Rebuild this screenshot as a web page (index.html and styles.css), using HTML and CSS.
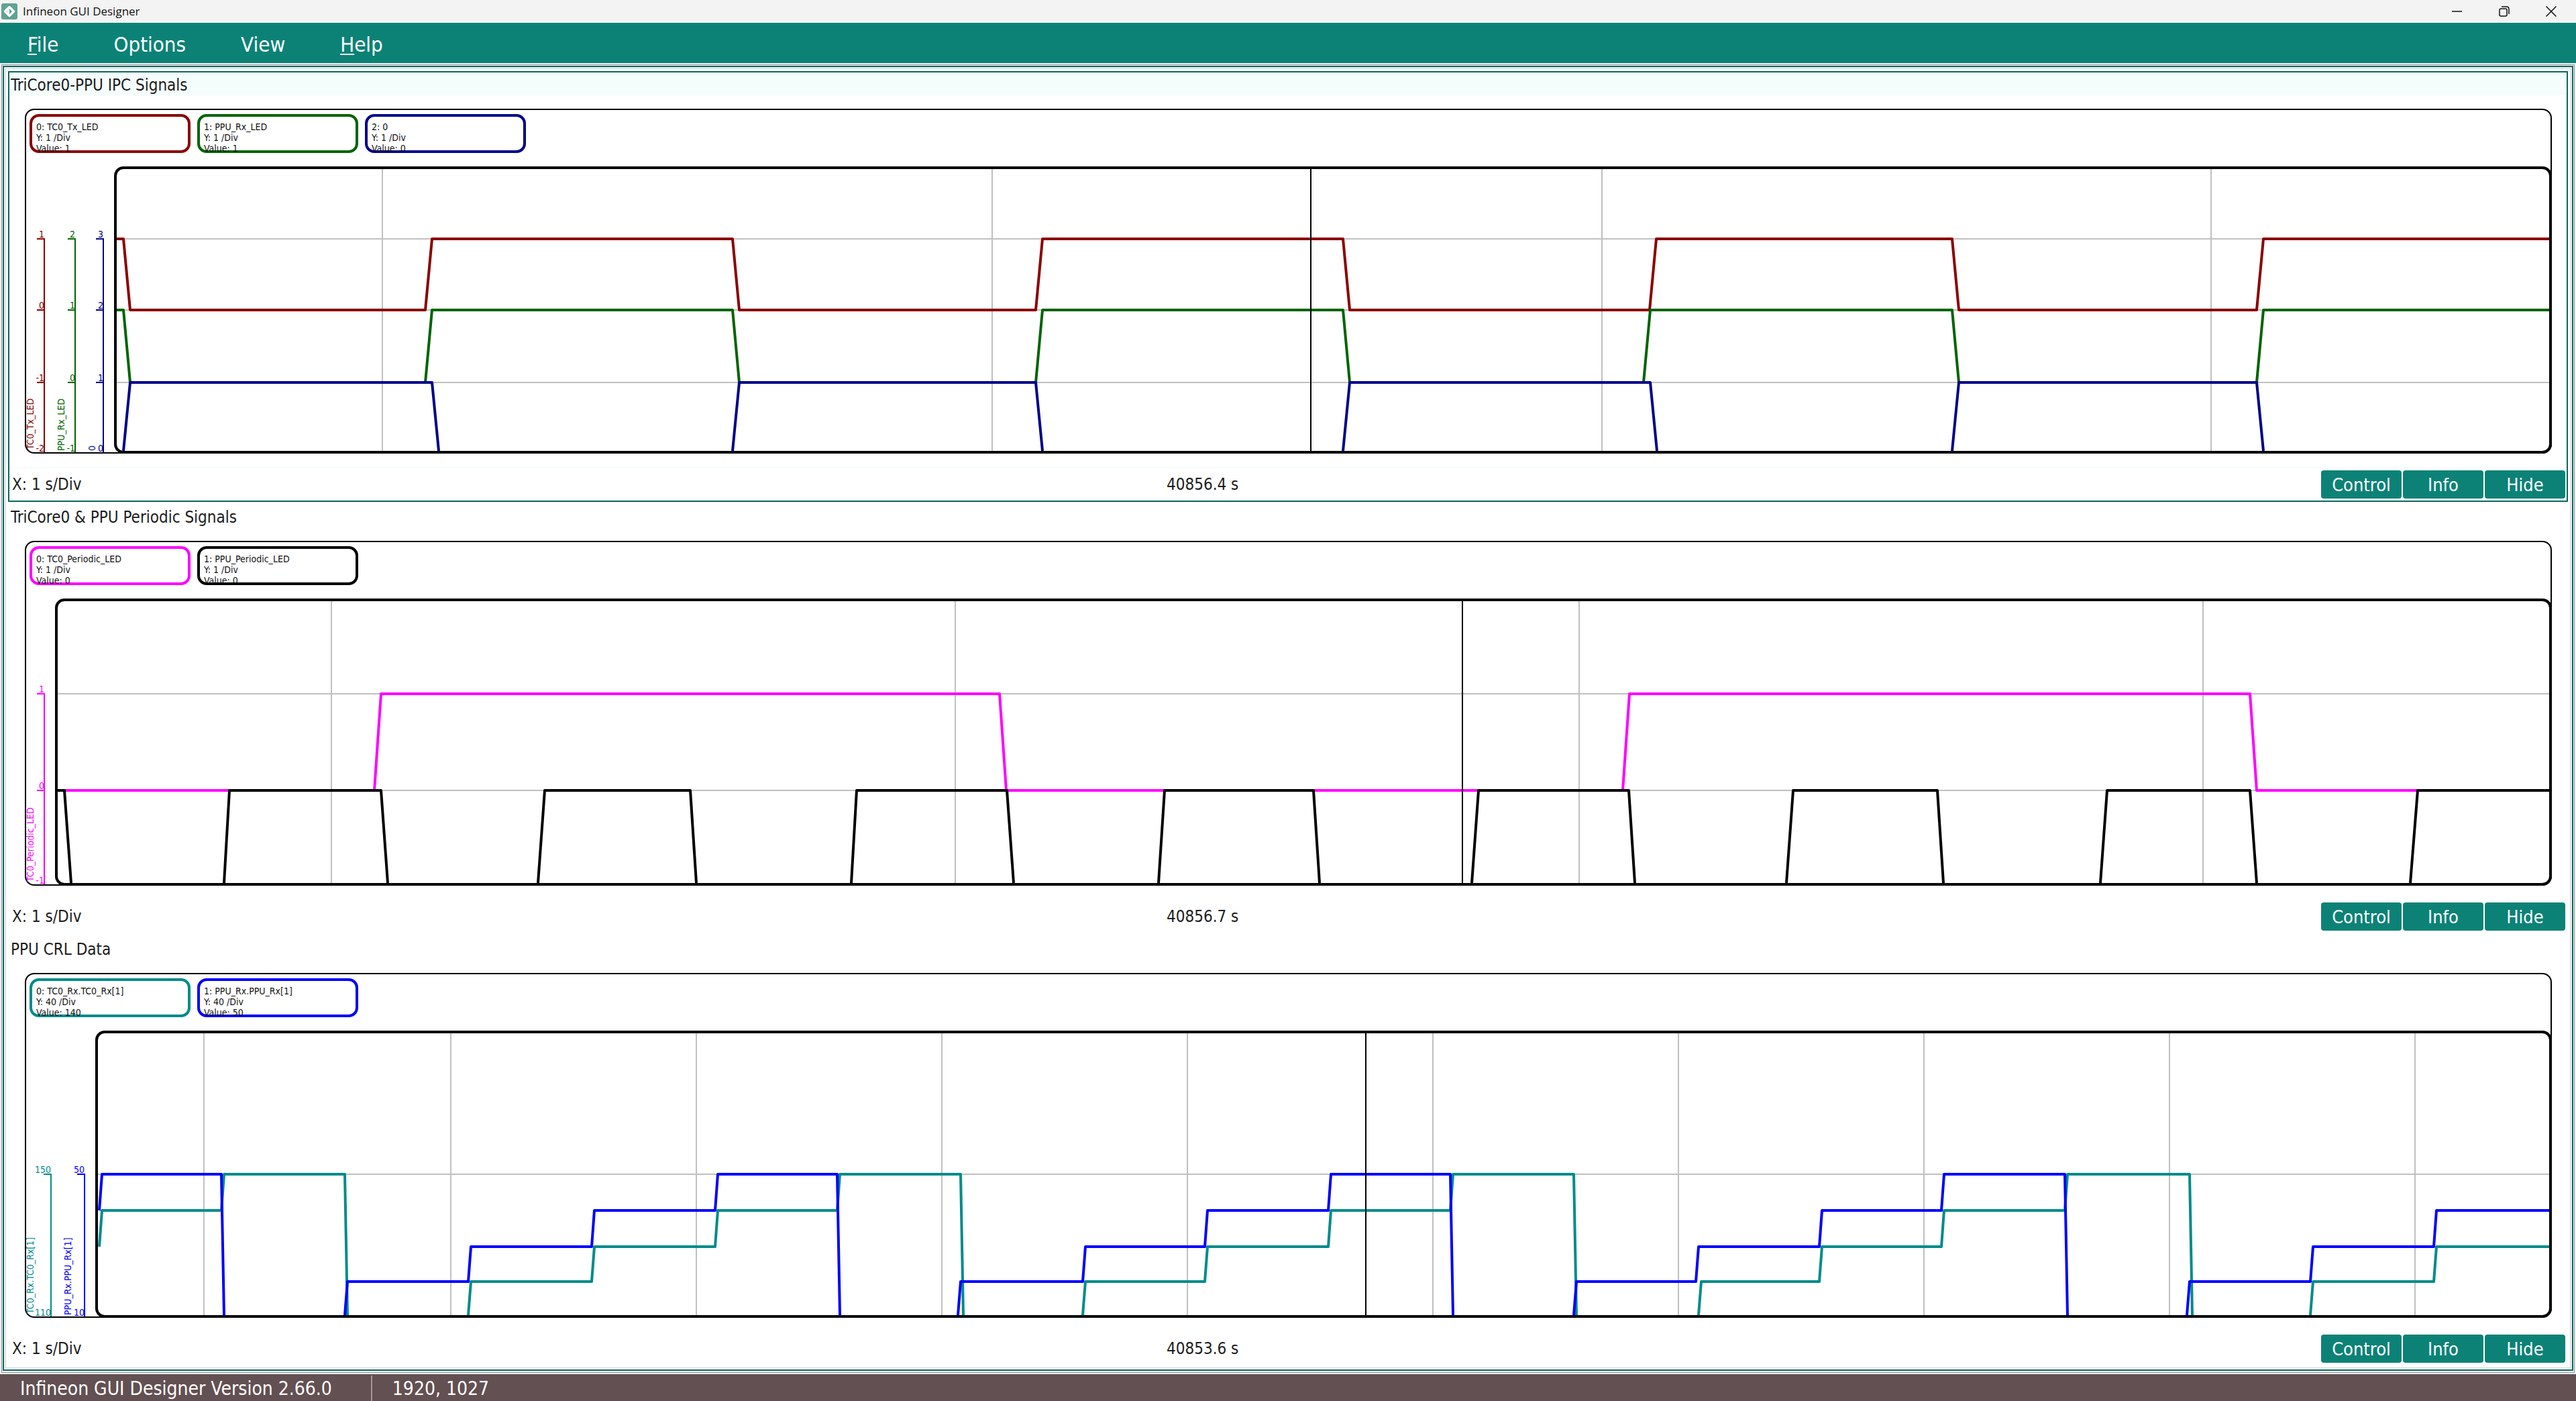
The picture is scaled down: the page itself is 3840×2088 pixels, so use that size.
FILE: index.html
```html
<!DOCTYPE html>
<html lang="en">
<head>
<meta charset="utf-8">
<title>Infineon GUI Designer</title>
<link rel="stylesheet" href="styles.css">
</head>
<body>
<header class="titlebar">
  <svg class="app-icon" width="24" height="24" viewBox="0 0 24 24" aria-hidden="true">
    <rect width="24" height="24" rx="3" fill="#5fa393"/>
    <path d="M12 5.500L18.500 12L12 18.500L5.500 12Z" fill="none" stroke="#fff" stroke-width="3.500" stroke-linejoin="round"/>
    <path d="M12 9V15A3 3 0 0 1 12 9Z" fill="#fff"/>
  </svg>
  <h1 class="app-title">Infineon GUI Designer</h1>
  <div class="window-controls">
    <button type="button" aria-label="Minimize"><svg width="16" height="16" viewBox="0 0 16 16"><path d="M0 8H15"/></svg></button>
    <button type="button" aria-label="Restore"><svg width="16" height="16" viewBox="0 0 16 16"><rect x="1" y="4" width="11" height="11" rx="2"/><path d="M4 1H11.500Q15 1 15 4.500V12"/></svg></button>
    <button type="button" aria-label="Close"><svg width="16" height="16" viewBox="0 0 16 16"><path d="M0.500 0.500L15.500 15.500M15.500 0.500L0.500 15.500"/></svg></button>
  </div>
</header>

<nav class="menubar">
  <button type="button"><u>F</u>ile</button>
  <button type="button">Options</button>
  <button type="button">View</button>
  <button type="button"><u>H</u>elp</button>
</nav>

<main class="workspace">
  <div class="frame">
    <div class="panels">

      <section class="panel selected">
        <h2 class="panel-title">TriCore0-PPU IPC Signals</h2>
        <div class="canvas">
          <div class="scope">
            <ul class="legend">
              <li class="chip darkred">0: TC0_Tx_LED<br>Y: 1 /Div<br>Value: 1</li>
              <li class="chip green">1: PPU_Rx_LED<br>Y: 1 /Div<br>Value: 1</li>
              <li class="chip navy">2: 0<br>Y: 1 /Div<br>Value: 0</li>
            </ul>
            <div class="chart">
              <svg class="axes" width="133" height="428">
                <g class="darkred">
                  <path d="M18 108H30M18 214H30M18 322H30M29 108V426"/>
                  <text x="29" y="106">1</text><text x="29" y="212">0</text><text x="29" y="320">-1</text><text x="29" y="425">-2</text>
                  <text class="name" transform="translate(13 422) rotate(-90)">TC0_Tx_LED</text>
                </g>
                <g class="green">
                  <path d="M64 108H76M64 214H76M64 322H76M75 108V426"/>
                  <text x="75" y="106">2</text><text x="75" y="212">1</text><text x="75" y="320">0</text><text x="75" y="425">-1</text>
                  <text class="name" transform="translate(59 424) rotate(-90)">PPU_Rx_LED</text>
                </g>
                <g class="navy">
                  <path d="M106 108H118M106 214H118M106 322H118M117 108V426"/>
                  <text x="117" y="106">3</text><text x="117" y="212">2</text><text x="117" y="320">1</text><text x="117" y="425">0</text>
                  <text class="name" transform="translate(105 424) rotate(-90)">0</text>
                </g>
              </svg>
              <div class="plot">
                <svg class="traces" viewBox="174 0 3626 420" preserveAspectRatio="none">
                  <path class="grid" d="M174 104H3800M174 210H3800M174 318H3800M570 0V420M1479 0V420M2388 0V420M3296 0V420"/>
                  <path class="darkred" d="M174 104H184L194 210H634L644 104H1092L1102 210H1544L1554 104H2002L2012 210H2459L2469 104H2910L2920 210H3364L3374 104H3800"/>
                  <path class="green" d="M174 210H184L194 318H634L644 210H1092L1102 318H1544L1554 210H2002L2012 318H2450L2460 210H2910L2920 318H3364L3374 210H3800"/>
                  <path class="navy" d="M184 420L194 318H644L654 420M1092 420L1102 318H1544L1554 420M2002 420L2012 318H2460L2470 420M2910 420L2920 318H3364L3374 420"/>
                  <path class="cursor" d="M1954 0V420"/>
                </svg>
              </div>
            </div>
          </div>
        </div>
        <footer class="panel-footer">
          <span class="readout">X: 1 s/Div</span>
          <span class="readout">40856.4 s</span>
          <div class="actions"><button type="button">Control</button><button type="button">Info</button><button type="button">Hide</button></div>
        </footer>
      </section>

      <section class="panel">
        <h2 class="panel-title">TriCore0 &amp; PPU Periodic Signals</h2>
        <div class="canvas">
          <div class="scope">
            <ul class="legend">
              <li class="chip magenta">0: TC0_Periodic_LED<br>Y: 1 /Div<br>Value: 0</li>
              <li class="chip black">1: PPU_Periodic_LED<br>Y: 1 /Div<br>Value: 0</li>
            </ul>
            <div class="chart">
              <svg class="axes" width="45" height="428">
                <g class="magenta">
                  <path d="M18 142H30M18 286H30M29 142V426"/>
                  <text x="29" y="140">1</text><text x="29" y="284">0</text><text x="29" y="425">-1</text>
                  <text class="name" transform="translate(13 422) rotate(-90)">TC0_Periodic_LED</text>
                </g>
              </svg>
              <div class="plot">
                <svg class="traces" viewBox="86 0 3714 420" preserveAspectRatio="none">
                  <path class="grid" d="M86 138H3800M86 282H3800M494 0V420M1424 0V420M2354 0V420M3284 0V420"/>
                  <path class="magenta" d="M86 282H558L568 138H1490L1500 282H2419L2429 138H3354L3364 282H3800"/>
                  <path class="black" d="M86 282H96L106 420M334 420L342 282H568L578 420M802 420L812 282H1029L1038 420M1269 420L1277 282H1501L1511 420M1727 420L1736 282H1958L1967 420M2194 420L2204 282H2428L2437 420M2663 420L2673 282H2888L2897 420M3131 420L3141 282H3354L3364 420M3593 420L3604 282H3800"/>
                  <path class="cursor" d="M2180 0V420"/>
                </svg>
              </div>
            </div>
          </div>
        </div>
        <footer class="panel-footer">
          <span class="readout">X: 1 s/Div</span>
          <span class="readout">40856.7 s</span>
          <div class="actions"><button type="button">Control</button><button type="button">Info</button><button type="button">Hide</button></div>
        </footer>
      </section>

      <section class="panel">
        <h2 class="panel-title">PPU CRL Data</h2>
        <div class="canvas">
          <div class="scope">
            <ul class="legend">
              <li class="chip teal">0: TC0_Rx.TC0_Rx[1]<br>Y: 40 /Div<br>Value: 140</li>
              <li class="chip blue">1: PPU_Rx.PPU_Rx[1]<br>Y: 40 /Div<br>Value: 50</li>
            </ul>
            <div class="chart">
              <svg class="axes" width="105" height="428">
                <g class="teal">
                  <path d="M28 214H40M39 214V426"/>
                  <text x="39" y="212">150</text><text x="39" y="425">110</text>
                  <text class="name" transform="translate(13 422) rotate(-90)">TC0_Rx.TC0_Rx[1]</text>
                </g>
                <g class="blue">
                  <path d="M78 214H90M89 214V426"/>
                  <text x="89" y="212">50</text><text x="89" y="425">10</text>
                  <text class="name" transform="translate(69 424) rotate(-90)">PPU_Rx.PPU_Rx[1]</text>
                </g>
              </svg>
              <div class="plot">
                <svg class="traces" viewBox="146 0 3654 420" preserveAspectRatio="none">
                  <path class="grid" d="M146 210H3800M304 0V420M672 0V420M1038 0V420M1404 0V420M1770 0V420M2136 0V420M2502 0V420M2868 0V420M3234 0V420M3600 0V420"/>
                  <path class="teal" d="M148 318L152 264H330L334 210H514L518 420M698 420L702 370H882L886 318H1066L1070 264H1248L1252 210H1432L1436 420M1614 420L1618 370H1796L1800 318H1980L1984 264H2162L2166 210H2346L2350 420M2532 420L2536 370H2712L2716 318H2894L2898 264H3078L3082 210H3264L3268 420M3444 420L3448 370H3628L3632 318H3800"/>
                  <path class="blue" d="M148 264L152 210H330L334 420M514 420L518 370H698L702 318H882L886 264H1066L1070 210H1248L1252 420M1428 420L1432 370H1614L1618 318H1796L1800 264H1980L1984 210H2162L2166 420M2346 420L2350 370H2528L2532 318H2712L2716 264H2894L2898 210H3078L3082 420M3260 420L3264 370H3444L3448 318H3628L3632 264H3800"/>
                  <path class="cursor" d="M2036 0V420"/>
                </svg>
              </div>
            </div>
          </div>
        </div>
        <footer class="panel-footer">
          <span class="readout">X: 1 s/Div</span>
          <span class="readout">40853.6 s</span>
          <div class="actions"><button type="button">Control</button><button type="button">Info</button><button type="button">Hide</button></div>
        </footer>
      </section>

    </div>
  </div>
</main>

<footer class="statusbar">
  <span class="status-item">Infineon GUI Designer Version 2.66.0</span>
  <span class="status-item">1920, 1027</span>
</footer>
</body>
</html>
```

FILE: styles.css
```css
* { box-sizing: border-box; }

body {
  margin: 0;
  min-height: 100vh;
  display: flex;
  flex-direction: column;
  background: #f0f0f0;
  color: #1c1c1c;
  font-family: "DejaVu Sans Condensed", "Noto Sans", sans-serif;
  font-size: 24px;
}

button {
  margin: 0;
  padding: 0;
  border: 0;
  background: none;
  color: inherit;
  font: inherit;
}

h1, h2, ul { margin: 0; padding: 0; font-weight: normal; }

/* Title bar */
.titlebar {
  display: flex;
  align-items: center;
  gap: 8px;
  height: 34px;
  padding: 0 2px;
  background: #f3f3f3;
}
.app-title { font: 17px/24px "Open Sans", "Noto Sans", sans-serif; color: #111; }
.window-controls { display: flex; margin-left: auto; }
.window-controls button { display: grid; place-items: center; width: 70px; height: 34px; }
.window-controls svg { fill: none; stroke: #111; stroke-width: 1.500; }

/* Menu */
.menubar {
  display: flex;
  height: 60px;
  background: #0c8276;
  color: #fff;
}
.menubar button { padding: 4px 41px 0; font-size: 31px; line-height: 56px; }
.menubar u { text-decoration-thickness: 2px; text-underline-offset: 3px; }

/* Nested frames round the panels */
.workspace {
  flex: 1;
  margin: 2px;
  padding: 1px;
  border: 1px solid #8a8c94;
  background: #fff;
}
.frame {
  padding: 2px;
  border: 2px solid #0a6860;
  background: #edf0f0;
}
.panels {
  display: flex;
  flex-direction: column;
  gap: 2px;
  padding: 3px 3px 2px;
  border: 1px solid #d4d8d8;
  background: #fff;
}

/* Panel */
.panel { border: 2px solid transparent; }
.panel.selected { border-color: #0a6860; background: #f5fcfc; }
.panel-title { padding: 5px 0 1px 2px; font-size: 24px; line-height: 28px; }
.canvas { margin: 0 2px 2px; padding: 20px 20px 20px 21px; background: #fff; }
.scope {
  padding-top: 6px;
  border: 2px solid #000;
  border-radius: 14px;
}
.legend { display: flex; gap: 10px; padding-left: 5px; list-style: none; }
.chip {
  width: 240px;
  height: 58px;
  padding: 7px 0 0 6px;
  border: 4px solid currentColor;
  border-radius: 14px;
  font-size: 14px;
  line-height: 16px;
  -webkit-text-fill-color: #111;
}
/* The plot frame shares its outer edge with the scope border */
.chart { display: flex; margin: 20px -2px -2px; }
.axes { flex: none; overflow: visible; }
.axes path { fill: none; stroke: currentColor; stroke-width: 2; }
.axes text { fill: currentColor; font-size: 14px; text-anchor: end; }
.axes text.name { text-anchor: start; }
.plot {
  flex: 1;
  min-width: 0;
  height: 428px;
  border: 4px solid #000;
  border-radius: 14px;
  overflow: hidden;
}
.traces { display: block; width: 100%; height: 100%; }
.traces path { fill: none; stroke: currentColor; stroke-width: 4; stroke-linejoin: round; vector-effect: non-scaling-stroke; }
.traces .grid { color: #c0c0c0; stroke-width: 2; }
.traces .cursor { color: #000; stroke-width: 2; }

.darkred { color: #8b0000; }
.green { color: #006400; }
.navy { color: #00008b; }
.magenta { color: #f0f; }
.black { color: #000; }
.teal { color: #008b8b; }
.blue { color: #00f; }

.panel-footer {
  display: grid;
  grid-template-columns: 1fr 1fr auto;
  align-items: center;
  height: 48px;
  padding: 0 0 0 4px;
  margin-right: 2px;
  background: #fff;
}
.readout { line-height: 28px; }
.actions { display: flex; gap: 2px; }
.actions button {
  width: 120px;
  height: 42px;
  border-radius: 4px;
  background: #0c8276;
  color: #fff;
  font-size: 27px;
}

/* Status bar */
.statusbar {
  display: flex;
  height: 40px;
  padding: 2px 0 0 30px;
  background: #635052;
  color: #fff;
  font-size: 28px;
  line-height: 40px;
}
.status-item + .status-item {
  margin-left: 58px;
  padding-left: 30px;
  border-left: 2px solid #a39698;
}
```
